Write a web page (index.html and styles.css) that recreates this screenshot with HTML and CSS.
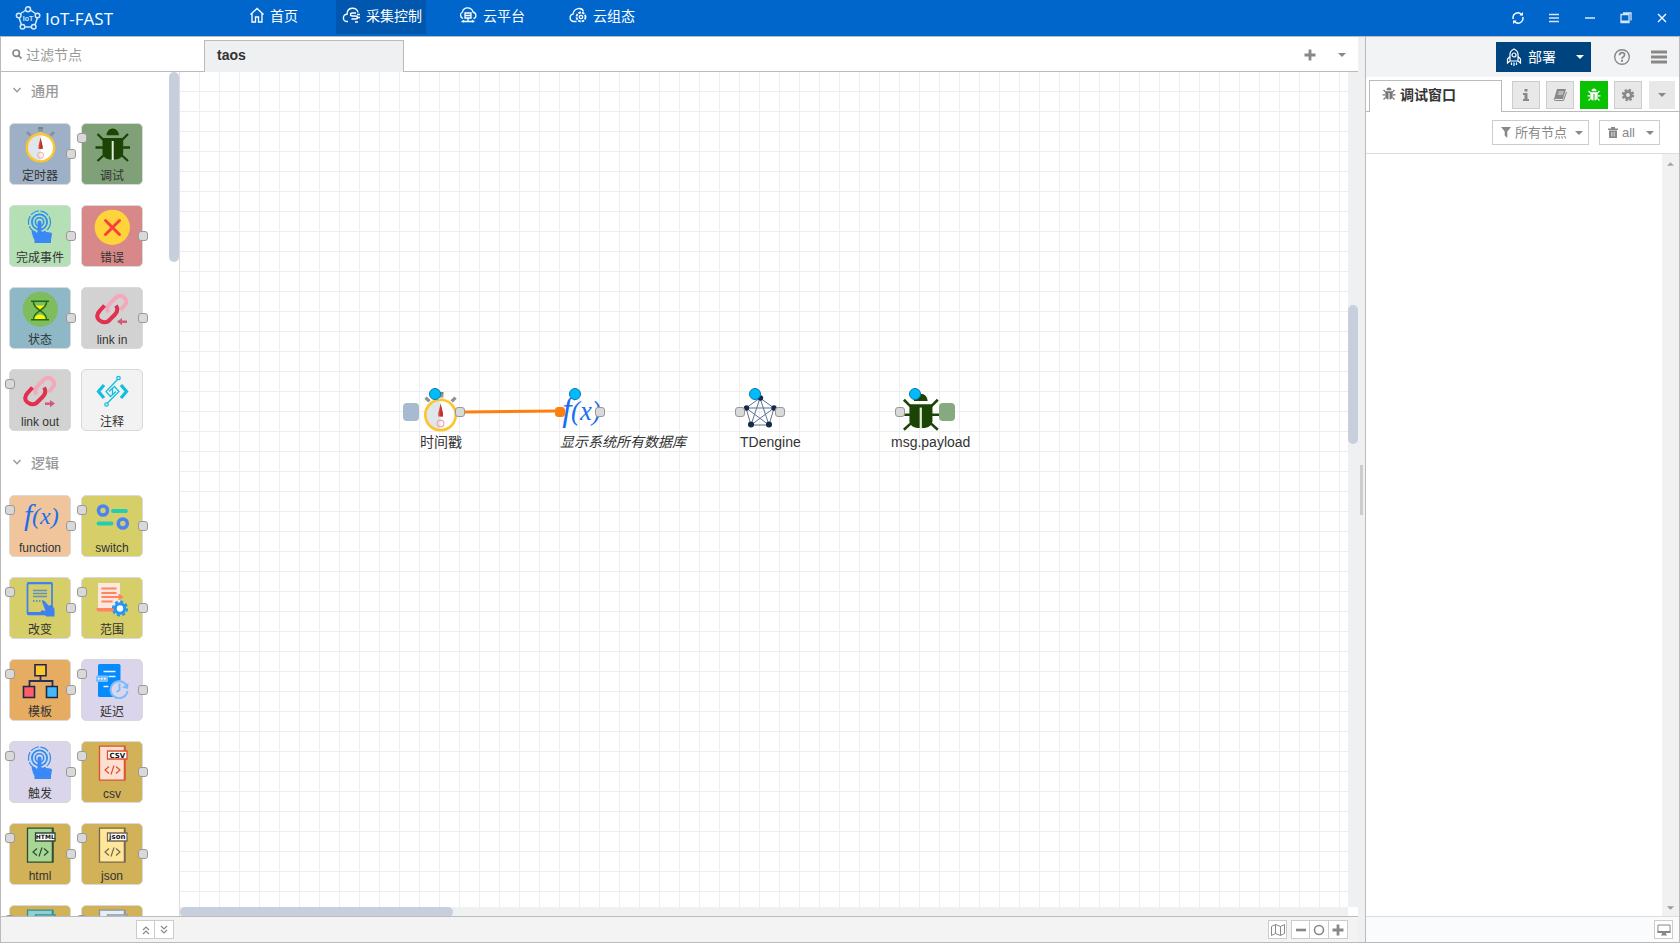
FILE: index.html
```html
<!DOCTYPE html>
<html lang="zh-CN">
<head>
<meta charset="utf-8">
<title>IoT-FAST</title>
<link rel="stylesheet" href="styles.css">
</head>
<body>
<svg class="defs" aria-hidden="true">
  <symbol id="timer" viewBox="0 0 36 36">
    <path d="M16 0h5v5h-5z" fill="#8e979c"/><path d="M16 0h5v2h-5z" fill="#7b8388"/><path d="M16.500 5.500h4v3h-4z" fill="#eef0f1"/>
    <path d="M5 5l3.500 3.500M32 5l-3.500 3.500" stroke="#8a9297" stroke-width="3"/>
    <circle cx="18.500" cy="20.700" r="13.700" fill="#fff"/><path d="M18.500 7a13.700 13.700 0 0 0 0 27.400z" fill="#dfe6ec"/>
    <circle cx="18.500" cy="20.700" r="13.700" fill="none" stroke="#fcc52c" stroke-width="2.400"/>
    <path d="M18.500 10.500l2 8.500v3h-4v-3z" fill="#d9453a"/><path d="M18.500 10.500l2 8.500v3h-2z" fill="#b23228"/>
    <circle cx="18.500" cy="28.300" r="3" fill="none" stroke="#f2a5a0" stroke-width="1"/>
  </symbol>
  <symbol id="bug" viewBox="0 0 36 36">
    <g fill="#1c4404"><path d="M12.500 8.200a6.200 6.700 0 0 1 12.400 0z"/><path d="M8.500 11h20.700v15.500q-1 5-7 6h-6.700q-6-1-7-6z"/></g>
    <g stroke="#1c4404" stroke-width="2.300"><path d="M9.500 13L3.500 7M28 13l6-6M9 20.500H1.500M28.500 20.500H36M10 28l-6.500 6M27.500 28l6.500 6"/></g>
    <path d="M18.700 14v19" stroke="#e2ecdd" stroke-width="2"/>
  </symbol>
  <symbol id="touch" viewBox="0 0 36 36">
    <g fill="none" stroke="#2a8df2"><circle cx="17.500" cy="13" r="11" stroke-width="1.200" stroke-dasharray="9 1.500"/><circle cx="17.500" cy="13" r="7.600" stroke-width="1.800"/><circle cx="17.500" cy="13" r="4.200" stroke-width="1.600"/></g>
    <path d="M15.500 13.500a2 2 0 0 1 4 0v9l9 1q1.500.2 1.500 1.500l-1 6v3H12.500v-3l-1.500-3-1.500-5.500q1.500-1.500 3 0l3 1.500z" fill="#3a87f6"/>
  </symbol>
  <symbol id="error" viewBox="0 0 36 36"><circle cx="18.300" cy="18.300" r="17.600" fill="#ffd43a"/><path d="M11.500 11.500l14 14M25.500 11.500l-14 14" stroke="#f9403f" stroke-width="3" stroke-linecap="round"/></symbol>
  <symbol id="status" viewBox="0 0 36 36"><circle cx="18.300" cy="18.300" r="17.600" fill="#7fbc5d"/><path d="M12.500 14.500h11l-5.500 4.500zM11 28q7-9 14 0z" fill="#fdf500"/><path d="M9 10.300h18M9 28.700h18M11.500 11c0 5 4.500 6.500 6.300 8.500C16 21.500 11.500 23 11.500 28.500M24.500 11c0 5-4.500 6.500-6.300 8.500 1.800 2 6.300 3.500 6.300 9" fill="none" stroke="#1d6b12" stroke-width="1.500"/></symbol>
  <symbol id="chain" viewBox="0 0 36 36">
    <g fill="none" stroke-width="4" stroke-linejoin="round"><path d="M14.500 21.500q-3-4.500 1-8.500l6.500-6.500q3.500-3 7.500-.5 4.500 4 1.500 8l-4.500 5" stroke="#f4a9ba"/><path d="M10.500 14.500L6 19.500q-5 5-1 9.500 5 4 9.500 1l6.500-6.500q4-4.500 1-9" stroke="#e2304f"/></g>
  </symbol>
  <symbol id="linkin" viewBox="0 0 36 36"><use href="#chain" width="36" height="36"/><path d="M23 30.500l5-3.500v2.500h5v2.500h-5v2.200z" fill="#cf5b78"/></symbol>
  <symbol id="linkout" viewBox="0 0 36 36"><use href="#chain" width="36" height="36"/><path d="M33 30.500l-5-3.500v2.500h-5v2.500h5v2.200z" fill="#cf5b78"/></symbol>
  <symbol id="comment" viewBox="0 0 36 36"><g fill="none" stroke="#10bfe0"><path d="M10 12L4.500 18.500l5.500 6.500M27 12l5.500 6.500L27 25" stroke-width="3.200"/><circle cx="24.500" cy="5" r="1.700" stroke-width="1.300"/><circle cx="12.500" cy="31.500" r="1.700" stroke-width="1.300"/><path d="M23.500 6.500L12 18.500l4.500 5 5.500-5M13.500 30L25 18.500l-4.500-5-5.500 5M18.500 16v5" stroke-width="1.300"/></g></symbol>
  <symbol id="switch" viewBox="0 0 36 36"><g fill="none" stroke="#4a84f3" stroke-width="3.600"><circle cx="9" cy="11.500" r="4.500"/><circle cx="28.800" cy="24.500" r="4.500"/></g><path d="M19 12h13M4.500 24.500h13" stroke="#22cdb4" stroke-width="3.800" stroke-linecap="round"/></symbol>
  <symbol id="change" viewBox="0 0 36 36"><rect x="5.500" y="2" width="24.500" height="31.500" rx="2" fill="none" stroke="#3c80f2" stroke-width="1.700"/><path d="M5 1.200h25.500v2H5zM5 31h20v3H7q-2 0-2-3z" fill="#3c80f2"/><path d="M11 9.500h14M11 12.500h14M11 15.500h14" stroke="#5f92bd" stroke-width="1.500"/><path d="M11 20h12" stroke="#3c80f2" stroke-width="1.500" stroke-dasharray="1.500 1.500"/><path d="M20 20.500q1.500-1.500 3 0l3.500 4 3.500-.5 2.500 4v7.500h-8l-6-5q1-2 3-1l2 .5z" fill="#3c80f2"/></symbol>
  <symbol id="range" viewBox="0 0 36 36"><path d="M4 2h22v27H4z" fill="#fde8e0"/><path d="M2.500 27h18v3.500H5q-2.500 0-2.500-3.500z" fill="#ff8460"/><path d="M7.500 7.500h15M7.500 12h15M7.500 16h21M7.500 20.500h11" stroke="#ff8460" stroke-width="2"/><path d="M24.500 12.500l5 3.500-5 3.500z" fill="#ff8460"/><circle cx="26" cy="27.500" r="4.700" fill="#fff" stroke="#2196f3" stroke-width="3"/><circle cx="26" cy="27.500" r="7" fill="none" stroke="#2196f3" stroke-width="2.200" stroke-dasharray="3 2.500"/></symbol>
  <symbol id="template" viewBox="0 0 36 36"><path d="M18.500 12v6M7.500 23v-5h23v5" fill="none" stroke="#25305a" stroke-width="1.800"/><g stroke="#1f2748" stroke-width="1.600"><path d="M13 1.800h11v11H13z" fill="#fdc82f"/><path d="M1.500 23.500h11v11h-11z" fill="#ff5d68"/><path d="M24.500 23.500h11v11h-11z" fill="#45b8fb"/></g></symbol>
  <symbol id="delay" viewBox="0 0 36 36"><rect x="4" y="1" width="22.500" height="33" rx="1.500" fill="#068bff"/><path d="M9.500 8.500h12M14.500 13.500h7M9.500 23.500h5" stroke="#e8f4ff" stroke-width="1.500"/><rect x="2" y="12.500" width="12" height="6.500" rx="1" fill="#7cc0fb"/><path d="M4 15.800h8" stroke="#fff" stroke-width="1.500" stroke-dasharray="1.500 1.500"/><circle cx="25" cy="26" r="8.500" fill="#dcd6ec"/><path d="M32.500 22.500A8.500 8.500 0 1 0 33.500 28M25.500 20.500V27l-3 2" fill="none" stroke="#78bcfb" stroke-width="2"/><path d="M34.500 20l-.5 6-6-1.500z" fill="#78bcfb"/></symbol>
  <symbol id="sheet" viewBox="0 0 36 36"><path d="M5.500 1.200H31v34H5.500z" fill="currentColor" stroke-width="1.300"/><path d="M30.500 2v33" stroke-width="1.500"/></symbol>
  <symbol id="tag" viewBox="0 0 36 36"><path d="M13.500 6H33v8H13.500z" fill="#fff" stroke-width="1.300"/><path d="M15 21.500L11 25l4 3.500M22 21.500l4 3.500-4 3.500M20 20.500l-3 9" fill="none" stroke-width="1.200"/></symbol>
  <symbol id="help" viewBox="0 0 18 18"><circle cx="9" cy="9" r="7.300" fill="none" stroke="currentColor" stroke-width="1.400"/><path d="M6.500 7.200q0-2.500 2.500-2.500t2.600 2.100q0 1.300-1.500 2.100Q9 9.500 9 10.700" fill="none" stroke="currentColor" stroke-width="1.700"/><path d="M8 11.800h2v2H8z" fill="currentColor"/></symbol>
  <symbol id="bugs" viewBox="0 0 14 14"><path d="M4.500 3.300a2.500 2.700 0 0 1 5 0zM3.300 4.300h7.400v5.200q-.6 2.800-3.200 3V6h-1v6.500q-2.600-.2-3.200-3z" fill="currentColor"/><path d="M3.500 5L1.500 3M10.500 5l2-2M3 7.800H.5M11 7.800h2.500M3.700 10.300l-2.200 2.200M10.300 10.300l2.200 2.200" stroke="currentColor" stroke-width="1.200"/></symbol>
  <symbol id="caret" viewBox="0 0 8 4"><path d="M0 0h8L4 4z" fill="currentColor"/></symbol>
  <symbol id="chev" viewBox="0 0 10 10"><path d="M1.500 3L5 6.700 8.500 3" fill="none" stroke="currentColor" stroke-width="1.400"/></symbol>
  <symbol id="plus" viewBox="0 0 12 12"><path d="M6 .5v11M.5 6h11" stroke="currentColor" stroke-width="2.800"/></symbol>
</svg>

<div class="app">
  <header class="topbar">
    <div class="brand">
      <svg width="26" height="26" viewBox="0 0 26 26" fill="none" stroke="#d5e8fb" stroke-width="1.500"><path d="M11 5L5 9M15.500 5l5.500 4M4 12.500l2.500 7.500M22.500 12.500L20 20M9.500 22h7"/><circle cx="13" cy="4.200" r="2.500"/><circle cx="3.700" cy="10.500" r="2.300"/><circle cx="22.500" cy="10.500" r="2.300"/><circle cx="7.500" cy="21.800" r="2.300"/><circle cx="18.700" cy="21.800" r="2.300"/><text class="brand-mark" x="13" y="16" text-anchor="middle">IoT</text></svg>
      <span>IoT-FAST</span>
    </div>
    <nav class="nav">
      <a class="nav-item" href="#"><svg width="20" height="20" viewBox="0 0 20 20" fill="none" stroke="#fff" stroke-width="1.300"><path d="M6.500 9.500L13 3.500l6.500 6M8 8.500V17h3.500v-5h3v5H18V8.500"/></svg>首页</a>
      <a class="nav-item active" href="#"><svg width="20" height="20" viewBox="0 0 20 20" fill="none" stroke="#fff" stroke-width="1.400"><path d="M8 16.500H7a3.600 3.600 0 0 1 0-7.200C7 1.500 17 1.500 18 7.500M16 8h-3.500q-2 0-2 1.500t2 1.500h3q2 0 2 1.500t-2 1.500h-4M17.500 12.500h2.500M15 17h3M17 9.500h3"/></svg>采集控制</a>
      <a class="nav-item" href="#"><svg width="20" height="20" viewBox="0 0 20 20" fill="none" stroke="#fff" stroke-width="1.300"><path d="M6 13.500a3.500 3.500 0 0 1-.5-6.500C6.500 1.500 14.500 1.500 16 7c4 1 3.500 6 .5 6.500M8 8h6v5H8zM8 10.500h6M11 13v3M4.500 16.500h13M6.500 15v2.500M15.500 15v2.500"/></svg>云平台</a>
      <a class="nav-item" href="#"><svg width="20" height="20" viewBox="0 0 20 20" fill="none" stroke="#fff" stroke-width="1.300"><path d="M9.500 16.500h-3a3.700 3.700 0 0 1-.5-7.300C7 2.500 15 2 16.500 6.500"/><circle cx="14" cy="12" r="4.500" stroke-width="1.800" stroke-dasharray="2.600 1"/><circle cx="14" cy="12" r="1.700"/></svg>云组态</a>
    </nav>
    <div class="winctl">
      <button aria-label="刷新"><svg width="12" height="12" viewBox="0 0 12 12" fill="none" stroke="#fff" stroke-width="1.400"><path d="M1.300 7A4.700 4.700 0 0 1 9.500 2.700M10.700 5A4.700 4.700 0 0 1 2.500 9.300"/><path d="M7.500 3.500h3.500V0zM4.500 8.500H1V12z" fill="#fff" stroke="none"/></svg></button>
      <button aria-label="菜单"><svg width="12" height="12" viewBox="0 0 12 12" stroke="#d5e6f8" stroke-width="1.300"><path d="M1 2.500h10M1 6h10M1 9.500h10"/></svg></button>
      <button aria-label="最小化"><svg width="12" height="12" viewBox="0 0 12 12" stroke="#fff" stroke-width="1.300"><path d="M1 6h10"/></svg></button>
      <button aria-label="还原"><svg width="12" height="12" viewBox="0 0 12 12" fill="none" stroke="#d5e6f8" stroke-width="1.300"><path d="M1 2.500h8v8H1zM3 1h8v7.500"/><path d="M1 9.500h8" stroke-width="2"/></svg></button>
      <button aria-label="关闭"><svg width="12" height="12" viewBox="0 0 12 12" stroke="#fff" stroke-width="1.300"><path d="M2 2l8 8M10 2l-8 8"/></svg></button>
    </div>
  </header>

  <div class="main">
    <div class="editor">
      <div class="panes">
        <aside class="palette">
          <label class="search"><svg width="10" height="10" viewBox="0 0 10 10" fill="none" stroke="#888" stroke-width="1.700"><circle cx="4.200" cy="4.200" r="3.200"/><path d="M6.500 6.500l3 3"/></svg><input type="text" placeholder="过滤节点" aria-label="过滤节点"></label>
          <div class="palette-scroll">
            <section class="category">
              <h2><svg width="10" height="10"><use href="#chev"/></svg>通用</h2>
              <div class="tiles">
                <div class="tile c-timer"><svg class="ico"><use href="#timer"/></svg>定时器<i class="port out"></i></div>
                <div class="tile c-debug"><svg class="ico"><use href="#bug"/></svg>调试<i class="port in"></i></div>
                <div class="tile c-done"><svg class="ico"><use href="#touch"/></svg>完成事件<i class="port out"></i></div>
                <div class="tile c-error"><svg class="ico"><use href="#error"/></svg>错误<i class="port out"></i></div>
                <div class="tile c-status"><svg class="ico"><use href="#status"/></svg>状态<i class="port out"></i></div>
                <div class="tile c-link"><svg class="ico"><use href="#linkin"/></svg>link in<i class="port out"></i></div>
                <div class="tile c-link"><svg class="ico"><use href="#linkout"/></svg>link out<i class="port in"></i></div>
                <div class="tile c-note"><svg class="ico"><use href="#comment"/></svg>注释</div>
              </div>
            </section>
            <section class="category">
              <h2><svg width="10" height="10"><use href="#chev"/></svg>逻辑</h2>
              <div class="tiles">
                <div class="tile c-fn"><svg class="ico" viewBox="0 0 36 36"><text class="fx-f" x="2" y="26">f</text><text class="fx-x" x="10" y="25">(x)</text></svg>function<i class="port in"></i><i class="port out"></i></div>
                <div class="tile c-olive"><svg class="ico"><use href="#switch"/></svg>switch<i class="port in"></i><i class="port out"></i></div>
                <div class="tile c-olive"><svg class="ico"><use href="#change"/></svg>改变<i class="port in"></i><i class="port out"></i></div>
                <div class="tile c-olive"><svg class="ico"><use href="#range"/></svg>范围<i class="port in"></i><i class="port out"></i></div>
                <div class="tile c-tpl"><svg class="ico"><use href="#template"/></svg>模板<i class="port in"></i><i class="port out"></i></div>
                <div class="tile c-lilac"><svg class="ico"><use href="#delay"/></svg>延迟<i class="port in"></i><i class="port out"></i></div>
                <div class="tile c-lilac"><svg class="ico"><use href="#touch"/></svg>触发<i class="port in"></i><i class="port out"></i></div>
                <div class="tile c-gold"><svg class="ico s-csv" viewBox="0 0 36 36"><use href="#sheet"/><use href="#tag"/><text class="tag-text" x="23.300" y="12.500" text-anchor="middle">CSV</text></svg>csv<i class="port in"></i><i class="port out"></i></div>
                <div class="tile c-gold"><svg class="ico s-html" viewBox="0 0 36 36"><use href="#sheet"/><use href="#tag"/><text class="tag-text small" x="23.300" y="12" text-anchor="middle">HTML</text></svg>html<i class="port in"></i><i class="port out"></i></div>
                <div class="tile c-gold"><svg class="ico s-json" viewBox="0 0 36 36"><use href="#sheet"/><use href="#tag"/><text class="tag-text" x="23.300" y="12" text-anchor="middle">json</text></svg>json<i class="port in"></i><i class="port out"></i></div>
                <div class="tile c-gold"><svg class="ico s-xml" viewBox="0 0 36 36"><use href="#sheet"/><use href="#tag"/></svg><i class="port in"></i><i class="port out"></i></div>
                <div class="tile c-gold"><svg class="ico s-yaml" viewBox="0 0 36 36"><use href="#sheet"/><use href="#tag"/></svg><i class="port in"></i><i class="port out"></i></div>
              </div>
            </section>
            <div class="thumb palette-thumb"></div>
          </div>
        </aside>
        <section class="workspace">
          <div class="tabs">
            <button class="flow-tab">taos</button>
            <div class="tab-tools">
              <button aria-label="添加"><svg width="12" height="12"><use href="#plus"/></svg></button>
              <button aria-label="列表"><svg width="8" height="4"><use href="#caret"/></svg></button>
            </div>
          </div>
          <div class="canvas-grid">
            <div class="canvas">
              <svg class="wires" width="100%" height="100%"><path d="M285 340L375 339" stroke="#ff7f0e" stroke-width="3"/></svg>
              <div class="node n1"><i class="nbtn left"></i><svg class="nico"><use href="#timer"/></svg><i class="port out"></i><i class="dot"></i><span>时间戳</span></div>
              <div class="node n2"><svg class="nico" viewBox="0 0 36 36"><text class="fx-f" x="2" y="26">f</text><text class="fx-x" x="10" y="25">(x)</text></svg><i class="port in hot"></i><i class="port out"></i><i class="dot"></i><span><em>显示系统所有数据库</em></span></div>
              <div class="node n3"><svg class="nico" viewBox="0 0 40 40"><path d="M20 6L6 16l5 17h18l5-17zL11 33 34 16H6l23 17z" fill="none" stroke="#5c7391" stroke-width="1"/><g fill="#15294b"><circle cx="20.500" cy="6" r="2.700"/><circle cx="6.500" cy="16" r="2.700"/><circle cx="34" cy="16" r="2.700"/><circle cx="11" cy="32.500" r="3"/><circle cx="29" cy="32.500" r="3"/></g></svg><i class="port in"></i><i class="port out"></i><i class="dot"></i><span>TDengine</span></div>
              <div class="node n4"><svg class="nico"><use href="#bug"/></svg><i class="nbtn right"></i><i class="port in"></i><i class="dot"></i><span>msg.payload</span></div>
            </div>
            <div class="vscroll"><div class="thumb"></div></div>
            <div class="hscroll"><div class="thumb"></div></div>
          </div>
        </section>
      </div>
      <footer class="footbar">
        <div class="group fold">
          <button aria-label="全部折叠"><svg width="10" height="10" viewBox="0 0 10 10" fill="none" stroke="#888" stroke-width="1.200"><path d="M2 5l3-3 3 3M2 9l3-3 3 3"/></svg></button>
          <button aria-label="全部展开"><svg width="10" height="10" viewBox="0 0 10 10" fill="none" stroke="#888" stroke-width="1.200"><path d="M2 1l3 3 3-3M2 5l3 3 3-3"/></svg></button>
        </div>
        <div class="group"><button aria-label="导航图"><svg width="14" height="12" viewBox="0 0 14 12" fill="none" stroke="#888" stroke-width="1"><path d="M.5 2.500l4-2 5 2 4-2v9l-4 2-5-2-4 2zM4.500.5v9M9.500 2.500v9"/></svg></button></div>
        <div class="group zoom">
          <button aria-label="缩小"><svg width="12" height="12" viewBox="0 0 12 12"><path d="M1 6h10" stroke="#888" stroke-width="2.600"/></svg></button>
          <button aria-label="重置"><svg width="12" height="12" viewBox="0 0 12 12"><circle cx="6" cy="6" r="4.500" fill="none" stroke="#888" stroke-width="1.600"/></svg></button>
          <button aria-label="放大"><svg width="12" height="12"><use href="#plus"/></svg></button>
        </div>
      </footer>
    </div>
    <div class="splitter"><i></i></div>
    <aside class="sidebar">
      <div class="side-head">
        <button class="deploy"><svg width="16" height="18" viewBox="0 0 16 18" fill="none" stroke="#fff" stroke-width="1.200"><path d="M4 13V6q0-3 4-5 4 2 4 5v7zM4 8.500L1.500 11v4L4 13M12 8.500l2.500 2.500v4L12 13M5.500 14.500V17M8 14.500V18M10.500 14.500V17"/><circle cx="8" cy="7" r="2"/></svg><span>部署</span><svg width="8" height="4"><use href="#caret"/></svg></button>
        <button class="plain" aria-label="帮助"><svg width="18" height="18"><use href="#help"/></svg></button>
        <button class="plain" aria-label="主菜单"><svg width="16" height="14" viewBox="0 0 16 14"><path d="M0 2h16M0 7h16M0 12h16" stroke="#888" stroke-width="3"/></svg></button>
      </div>
      <div class="side-tabs">
        <button class="side-tab"><svg width="14" height="14"><use href="#bugs"/></svg>调试窗口</button>
        <div class="side-icons">
          <button aria-label="信息"><svg width="8" height="12" viewBox="0 0 8 12"><path d="M2.500 0h3v2.500h-3zM1 4h4.500v6H7v2H1v-2h1.500V6H1z" fill="#888"/></svg></button>
          <button aria-label="帮助文档"><svg width="14" height="12" viewBox="0 0 14 12"><path d="M4 0h9L10 10H1z" fill="#888"/><path d="M1 10q0 1.500 1.500 1.500h8L13.500 3" fill="none" stroke="#888"/><path d="M5.500 3h5M5 5h5" stroke="#e8e8e8"/></svg></button>
          <button class="on" aria-label="调试"><svg width="14" height="14"><use href="#bugs"/></svg></button>
          <button aria-label="配置"><svg width="14" height="14" viewBox="0 0 14 14" fill="none" stroke="#888"><circle cx="7" cy="7" r="3.300" stroke-width="2.800"/><circle cx="7" cy="7" r="5.200" stroke-width="2" stroke-dasharray="2.400 1.680"/></svg></button>
          <button class="more" aria-label="更多"><svg width="8" height="4"><use href="#caret"/></svg></button>
        </div>
      </div>
      <div class="filters">
        <button><svg width="10" height="11" viewBox="0 0 10 11"><path d="M0 0h10L6.300 4.500V11L3.700 8.500v-4z" fill="#888"/></svg><span>所有节点</span><svg width="8" height="4"><use href="#caret"/></svg></button>
        <button><svg width="10" height="11" viewBox="0 0 10 11"><path d="M0 1.500h3V0h4v1.500h3V3H0zM1 3.500h8V11H1z" fill="#888"/><path d="M3.500 5v4.500M5 5v4.500M6.500 5v4.500" stroke="#ddd" stroke-width=".7"/></svg><span>all</span><svg class="push" width="8" height="4"><use href="#caret"/></svg></button>
      </div>
      <div class="messages"><div class="bar"><svg width="7" height="4" viewBox="0 0 8 4"><path d="M0 4h8L4 0z" fill="#a3a3a3"/></svg><svg width="7" height="4"><use href="#caret"/></svg></div></div>
      <div class="side-foot"><div class="group"><button aria-label="新窗口"><svg width="14" height="12" viewBox="0 0 14 12"><path d="M1 1h12v7.500H1z" fill="none" stroke="#888"/><path d="M.5 7h13v2H.5zM5 9h4v2H5zM4 10.500h6v1H4z" fill="#888"/></svg></button></div></div>
    </aside>
  </div>
</div>
</body>
</html>
```

FILE: styles.css
```css
* { box-sizing: border-box; }
body { margin: 0; font-family: "Liberation Sans", "Noto Sans CJK SC", sans-serif; font-size: 14px; color: #333; background: #fff; }
button { font: inherit; color: inherit; margin: 0; padding: 0; border: 0; background: none; display: flex; align-items: center; justify-content: center; }
svg { display: block; flex: none; }
.defs { position: absolute; width: 0; height: 0; }
.app { display: flex; flex-direction: column; height: 100vh; overflow: hidden; }

.topbar { display: flex; height: 36px; flex: none; background: #06c; color: #fff; }
.brand { display: flex; align-items: center; gap: 4px; width: 240px; padding-left: 15px; font-family: "Open Sans", sans-serif; font-size: 17px; }
.brand-mark { font: bold 7px "Liberation Sans", sans-serif; fill: #d5e8fb; stroke: none; }
.nav { display: flex; gap: 34px; flex: 1; }
.nav-item { display: flex; align-items: center; gap: 6px; height: 34px; padding: 0 4px 4px; color: #fff; text-decoration: none; white-space: nowrap; }
.nav-item.active { background: #0057ad; margin-right: -7px; }
.winctl { display: flex; }
.winctl button { width: 36px; }

.main { display: flex; flex: 1; min-height: 0; border: 1px solid #bbb; }
.editor { flex: 1; min-width: 0; display: flex; flex-direction: column; }
.panes { flex: 1; min-height: 0; display: flex; }
.palette { width: 179px; flex: none; display: flex; flex-direction: column; border-right: 1px solid #ddd; }
.search { display: flex; align-items: center; gap: 4px; height: 35px; flex: none; padding-left: 11px; border-bottom: 1px solid #bbb; margin-right: -1px; background: #fff; }
.search input { width: 130px; border: 0; padding: 2px 0 0; outline: 0; font: inherit; background: none; }
.search input::placeholder { color: #999; }
.palette-scroll { flex: 1; min-height: 0; overflow: hidden; position: relative; }
.thumb { background: #c8cfdc; border-radius: 5px; }
.palette-thumb { position: absolute; top: 0; right: 0; width: 10px; height: 190px; }
.category { padding: 0 0 13px 8px; }
.category h2 { display: flex; align-items: center; gap: 9px; height: 38px; margin: 0 0 13px; padding: 0 0 2px 3px; font-size: 14px; font-weight: 500; color: #999; }
.tiles { display: grid; grid-template-columns: 62px 62px; gap: 20px 10px; }
.tile { position: relative; height: 62px; padding-top: 3px; border: 1px solid #d9d9d9; border-radius: 5px; font-size: 12px; line-height: 16px; text-align: center; color: #333; white-space: nowrap; }
.ico { width: 36px; height: 36px; margin: 0 auto 5px; overflow: visible; }
.port { position: absolute; width: 10px; height: 10px; border: 1px solid #999; border-radius: 3px; background: #d9d9d9; }
.tile .in { left: -5px; top: 9px; }
.tile .out { right: -6px; top: 25px; }
.c-timer { background: #9eb0c6; }
.c-debug { background: #80a078; }
.c-done { background: #b5e0b5; }
.c-error { background: #d88888; }
.c-status { background: #8eb8c6; }
.c-link { background: #d2d2d2; }
.c-note { background: #f2f2f2; }
.c-fn { background: #f0c59b; }
.c-olive { background: #d6ce68; }
.c-tpl { background: #e6ac62; }
.c-lilac { background: #dad5ea; }
.c-gold { background: #d1b258; }
.s-csv { color: #fde0d2; stroke: #dd5030; }
.s-html { color: #a8d695; stroke: #2d4a35; }
.s-json { color: #fee79b; stroke: #786650; }
.s-xml { color: #8fd0d0; stroke: #2f8f9c; }
.s-yaml { color: #e8eef5; stroke: #8896ad; }
.tag-text { font: bold 7px "DejaVu Sans", sans-serif; fill: #111; stroke: none; }
.tag-text.small { font-size: 6px; }
.fx-f { font: italic 30px "Liberation Serif", serif; fill: #1a6ff0; }
.fx-x { font: italic 24px "Liberation Serif", serif; fill: #1a6ff0; }

.workspace { flex: 1; min-width: 0; display: flex; flex-direction: column; }
.tabs { display: flex; align-items: flex-end; height: 35px; flex: none; padding-left: 24px; border-bottom: 1px solid #bbb; }
.flow-tab { width: 200px; height: 32px; margin-bottom: -1px; padding: 0 12px 4px; justify-content: flex-start; border: 1px solid #bbb; border-bottom: 0; background: #eff0f2; font-weight: bold; }
.tab-tools { display: flex; align-self: stretch; margin-left: auto; color: #888; }
.tab-tools button { width: 32px; padding-top: 1px; }
.canvas-grid { flex: 1; min-height: 0; display: grid; grid-template-columns: 1fr 10px; grid-template-rows: 1fr 9px; }
.canvas { position: relative; overflow: hidden; background-image: linear-gradient(to left, #eee 1px, transparent 1px), linear-gradient(to top, #eee 1px, transparent 1px); background-size: 20px 20px; }
.vscroll { background: #eff0f2; padding-top: 233px; }
.vscroll .thumb { height: 139px; }
.hscroll { background: #eff0f2; overflow: hidden; }
.hscroll .thumb { width: 273px; height: 10px; }
.wires { position: absolute; inset: 0; }
.node { position: absolute; top: 320px; width: 40px; height: 40px; }
.n1 { left: 240px; }
.n2 { left: 380px; }
.n3 { left: 560px; }
.n4 { left: 720px; }
.nico { width: 40px; height: 40px; overflow: visible; }
.node .port { top: 15px; }
.node .in { left: -5px; }
.node .out { right: -5px; }
.node .hot { background: #ff7f0e; border-color: #ff7f0e; }
.dot { position: absolute; left: 9px; top: -4px; width: 12px; height: 12px; border: 1px solid #0b7aa5; border-radius: 50%; background: #00bcff; }
.nbtn { position: absolute; top: 11px; width: 16px; height: 18px; border-radius: 4px; }
.nbtn.left { left: -17px; background: #a6bbcf; }
.nbtn.right { left: 39px; background: #87a980; }
.node span { position: absolute; top: 40px; left: 0; line-height: 20px; white-space: nowrap; }
.n4 span { left: -9px; }

.footbar { display: flex; align-items: center; height: 26px; flex: none; padding: 0 10px 0 135px; gap: 4px; border-top: 1px solid #bbb; background: #f3f3f3; }
.fold { margin-right: auto; }
.group { display: flex; }
.group button { width: 19px; height: 19px; border: 1px solid #ccc; background: #fff; color: #888; }
.group button + button { margin-left: -1px; width: 20px; }

.splitter { width: 7px; flex: none; display: flex; align-items: center; justify-content: center; background: #eff0f2; }
.splitter i { width: 3px; height: 50px; background: #ccc; }

.sidebar { width: 314px; flex: none; display: flex; flex-direction: column; border-left: 1px solid #bbb; }
.side-head { display: flex; align-items: center; justify-content: flex-end; height: 40px; flex: none; padding-right: 12px; gap: 20px; background: #f2f3f5; color: #888; }
.deploy { width: 95px; height: 30px; padding: 0 7px 0 10px; gap: 6px; justify-content: flex-start; background: #00447f; color: #fff; margin-right: 2px; }
.deploy span { padding-bottom: 2px; }
.deploy svg:last-child { margin-left: auto; }
.side-tabs { display: flex; align-items: flex-end; justify-content: space-between; height: 35px; flex: none; padding: 0 4px 0 3px; border-bottom: 1px solid #bbb; }
.side-tab { width: 133px; height: 32px; margin-bottom: -1px; padding: 0 12px 5px; gap: 4px; justify-content: flex-start; border: 1px solid #bbb; border-bottom: 0; background: #fff; font-weight: bold; }
.side-tab svg { color: #777; }
.side-icons { display: flex; gap: 6px; padding-bottom: 2px; color: #888; }
.side-icons button { width: 28px; height: 28px; border: 1px solid #ccc; background: #e8e8e8; }
.side-icons .on { background: #0ac102; border-color: #0ac102; color: #fff; }
.side-icons .more { width: 26px; border: 0; margin-left: 1px; }
.filters { display: flex; align-items: center; justify-content: flex-end; gap: 10px; height: 42px; flex: none; padding-right: 19px; border-bottom: 1px solid #ddd; color: #888; }
.filters button { height: 25px; padding: 0 5px 0 8px; gap: 4px; border: 1px solid #ccc; font-size: 13px; line-height: 18px; }
.filters button svg:last-child { margin-left: 4px; }
.filters .push:last-child { margin-left: 7px; }
.messages { flex: 1; display: flex; justify-content: flex-end; }
.bar { width: 17px; display: flex; flex-direction: column; justify-content: space-between; align-items: center; padding: 8px 0 6px; background: #f1f1f1; color: #999; }
.side-foot { display: flex; align-items: center; justify-content: flex-end; height: 26px; flex: none; padding-right: 6px; border-top: 1px solid #ddd; background: #fafbfd; }
```
